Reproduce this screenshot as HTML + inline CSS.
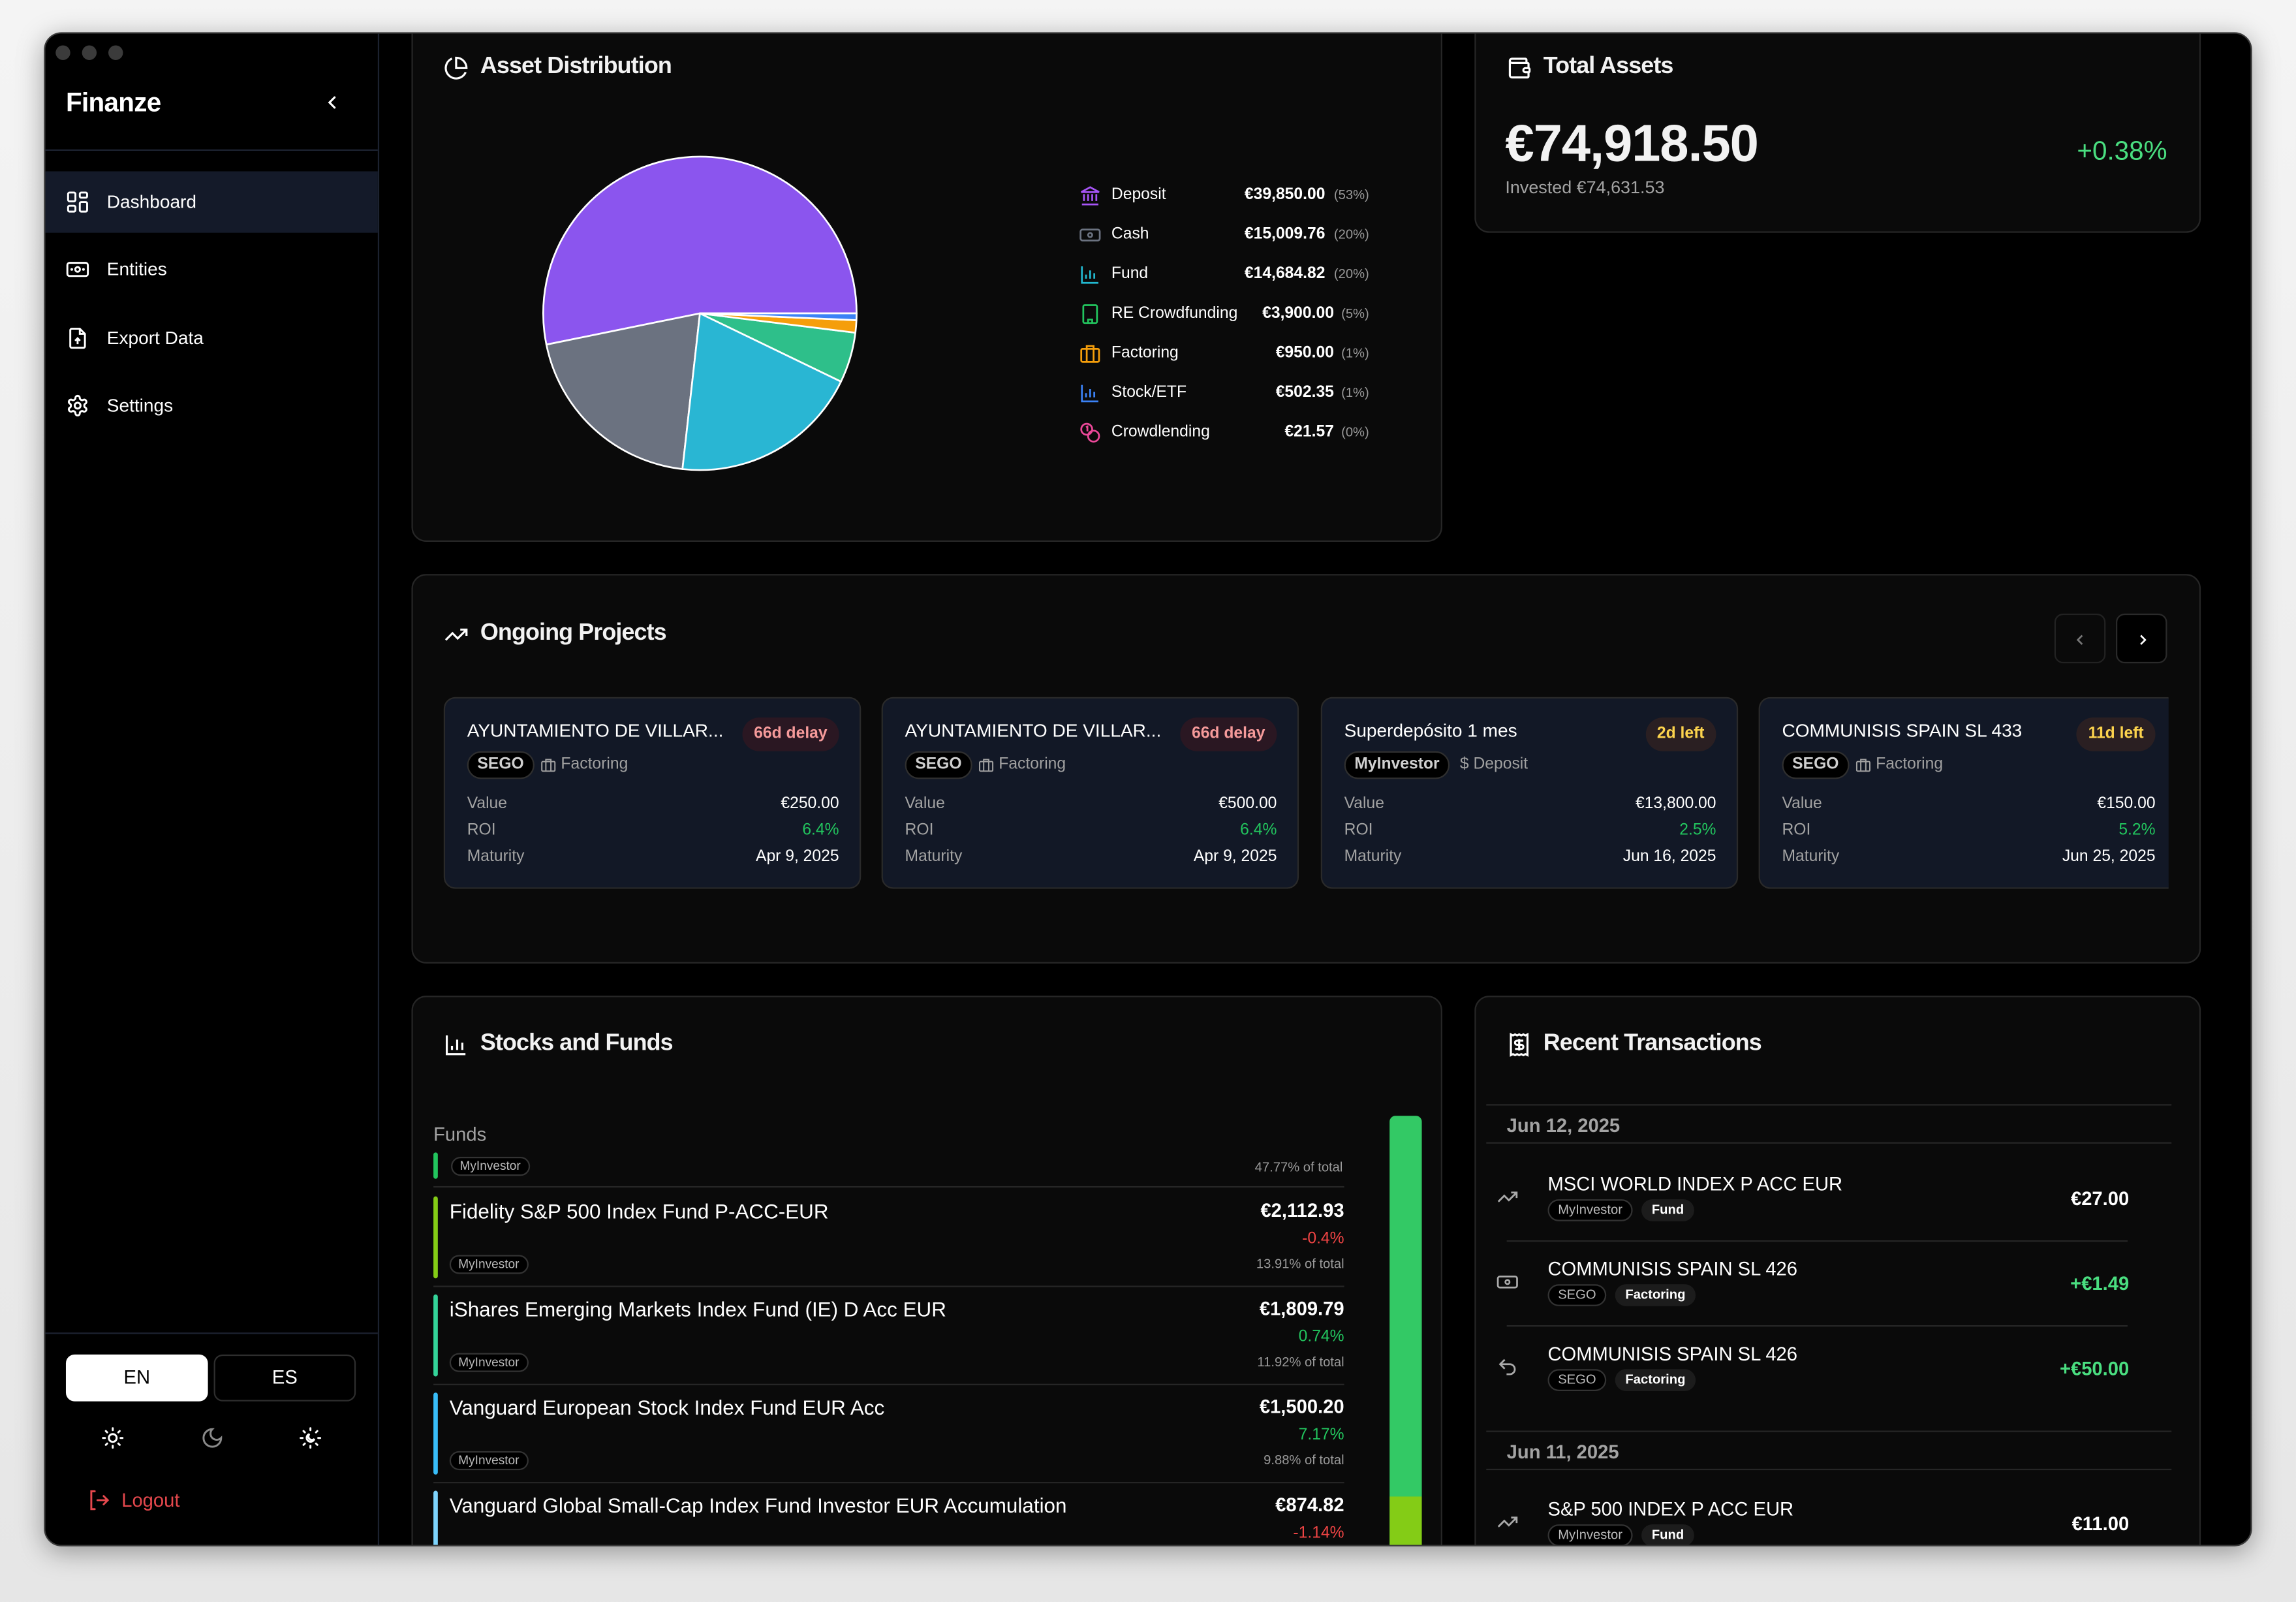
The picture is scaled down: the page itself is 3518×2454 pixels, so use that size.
<!DOCTYPE html>
<html><head><meta charset="utf-8">
<style>
*{box-sizing:border-box;margin:0;padding:0}
html,body{width:3518px;height:2454px;overflow:hidden;background:#ececec;font-family:"Liberation Sans",Arial,sans-serif}
#s{position:absolute;left:0;top:0;width:1568px;height:1094px;transform:scale(2.2436,2.2431);transform-origin:0 0;background:linear-gradient(#f4f4f4,#e6e6e6)}
.win{position:absolute;left:30px;top:22px;width:1508px;height:1034px;border-radius:12px;background:#000;overflow:hidden;box-shadow:0 4px 18px rgba(0,0,0,.35);border:1px solid #3a3a3a}
.a{position:absolute}
.side{position:absolute;left:0;top:0;width:228px;height:1034px;background:#000;border-right:1px solid #1c2230}
.dot{position:absolute;top:8px;width:10px;height:10px;border-radius:50%;background:#3b3b3b}
.nav{position:absolute;left:0;width:227px;height:42px;display:flex;align-items:center;color:#fff;font-size:12.5px}
.nav svg{margin-left:14px;margin-right:12px}
.card{position:absolute;background:#0a0a0a;border:1px solid #262626;border-radius:10px}
.ttl{position:absolute;display:flex;align-items:center;color:#f2f2f2;font-weight:bold;font-size:16px;letter-spacing:-.4px}
.ttl svg{margin-right:8px}
.lg{position:absolute;left:0;width:198px;height:16px;font-size:11px;color:#fff}
.lg .n{position:absolute;left:22px;top:1px}
.lg .v{position:absolute;right:30px;top:1px;font-weight:bold}
.lg .p{position:absolute;right:0;top:2px;color:#9a9a9a;font-size:9px}
.lg svg{position:absolute;left:0;top:0}
.pc{position:absolute;top:476px;width:285px;height:131px;background:#121826;border:1px solid #2a2a2a;border-radius:8px;overflow:hidden}
.pc .t{position:absolute;left:15px;top:15px;color:#fff;font-size:12.5px;white-space:nowrap}
.pc .b{position:absolute;right:14px;top:13px;height:23px;padding:0 8px;border-radius:12px;font-size:11px;font-weight:bold;line-height:23px}
.pc .pill{position:absolute;left:15px;top:36px;height:19px;padding:0 6px;border-radius:10px;background:#000;border:1px solid #2f2f2f;color:#d0d0d0;font-size:11px;font-weight:bold;line-height:17px}
.pc .cat{position:absolute;top:39px;color:#a0a0a0;font-size:11px;display:flex;align-items:center}
.pc .r{position:absolute;left:15px;right:14px;height:14px;font-size:11px;color:#a3a3a3}
.pc .r span{position:absolute;right:0;color:#fff}
.pl{display:inline-block;height:13px;padding:0 5px;border-radius:7px;border:1px solid #333;background:#000;color:#bbb;font-size:8.5px;line-height:11px}
.fr{position:absolute;left:14px;width:622px;height:60px}
.fr .bar{position:absolute;left:0;top:0;width:3px;height:56px;border-radius:2px}
.fr .nm{position:absolute;left:11px;top:2px;color:#fff;font-size:14px;white-space:nowrap}
.fr .v{position:absolute;right:0;top:2px;color:#fff;font-size:13px;font-weight:bold}
.fr .ch{position:absolute;right:0;top:23px;font-size:11px}
.fr .pl{position:absolute;left:11px;top:40px}
.fr .of{position:absolute;right:0;top:41px;color:#9a9a9a;font-size:9px}
.hl{position:absolute;height:1px;background:#262626}
.tx{position:absolute;left:14px;width:432px;height:58px}
.tx .nm{position:absolute;left:35px;top:-1px;color:#fff;font-size:13px}
.tx .tags{position:absolute;left:35px;top:17px;display:flex;gap:6px}
.tx .amt{position:absolute;right:0;top:9px;font-size:13px;font-weight:bold}
.tx svg{position:absolute;left:0;top:8px}
.tg{height:15px;padding:0 6px;border-radius:8px;font-size:9px;line-height:13px;border:1px solid #333;color:#bbb;background:#000}
.tg.f{background:#1c1c1c;border-color:#1c1c1c;color:#fff;font-weight:bold}
</style></head><body>
<div id="s">
<div class="win">
 <div class="side">
  <div class="dot" style="left:7px"></div><div class="dot" style="left:25px"></div><div class="dot" style="left:43px"></div>
  <div class="a" style="left:14px;top:37px;color:#fff;font-size:18px;font-weight:bold;letter-spacing:-.3px">Finanze</div>
  <svg class="a" style="left:190px;top:41px" width="12" height="12" viewBox="0 0 12 12"><path d="M7.5 2.5L4 6l3.5 3.5" stroke="#fff" stroke-width="1.4" fill="none" stroke-linecap="round"/></svg>
  <div class="a" style="left:0;top:79px;width:227px;height:1px;background:#1c2230"></div>
  <div class="nav" style="top:94px;background:#141a29"><svg width="16" height="16" viewBox="0 0 16 16" fill="none" stroke="#fff" stroke-width="1.3"><rect x="1.5" y="1.5" width="5" height="6" rx="1"/><rect x="9.5" y="1.5" width="5" height="3.5" rx="1"/><rect x="9.5" y="8" width="5" height="6.5" rx="1"/><rect x="1.5" y="10.5" width="5" height="4" rx="1"/></svg>Dashboard</div>
  <div class="nav" style="top:140px"><svg width="16" height="16" viewBox="0 0 16 16" fill="none" stroke="#fff" stroke-width="1.3"><rect x="1" y="3.5" width="14" height="9" rx="1.5"/><circle cx="8" cy="8" r="1.6"/><path d="M4 8h.01M12 8h.01" stroke-linecap="round" stroke-width="1.8"/></svg>Entities</div>
  <div class="nav" style="top:187px"><svg width="16" height="16" viewBox="0 0 16 16" fill="none" stroke="#fff" stroke-width="1.3"><path d="M9.5 1.5H4a1 1 0 0 0-1 1v11a1 1 0 0 0 1 1h8a1 1 0 0 0 1-1V5z"/><path d="M9.5 1.5V5H13M8 12V8M6.3 9.7L8 8l1.7 1.7"/></svg>Export Data</div>
  <div class="nav" style="top:233px"><svg width="16" height="16" viewBox="0 0 24 24" fill="none" stroke="#fff" stroke-width="2"><path d="M12.22 2h-.44a2 2 0 0 0-2 2v.18a2 2 0 0 1-1 1.730l-.43.25a2 2 0 0 1-2 0l-.15-.08a2 2 0 0 0-2.73.73l-.22.38a2 2 0 0 0 .73 2.73l.15.1a2 2 0 0 1 1 1.72v.51a2 2 0 0 1-1 1.74l-.15.09a2 2 0 0 0-.73 2.73l.22.38a2 2 0 0 0 2.73.73l.15-.08a2 2 0 0 1 2 0l.43.25a2 2 0 0 1 1 1.73V20a2 2 0 0 0 2 2h.44a2 2 0 0 0 2-2v-.18a2 2 0 0 1 1-1.73l.43-.25a2 2 0 0 1 2 0l.15.08a2 2 0 0 0 2.73-.73l.22-.39a2 2 0 0 0-.73-2.73l-.15-.08a2 2 0 0 1-1-1.74v-.5a2 2 0 0 1 1-1.74l.15-.09a2 2 0 0 0 .73-2.73l-.22-.38a2 2 0 0 0-2.73-.73l-.15.08a2 2 0 0 1-2 0l-.43-.25a2 2 0 0 1-1-1.73V4a2 2 0 0 0-2-2z"/><circle cx="12" cy="12" r="3"/></svg>Settings</div>
  <div class="a" style="left:0;top:887px;width:227px;height:1px;background:#1c2230"></div>
  <div class="a" style="left:14px;top:902px;width:97px;height:32px;background:#fff;border-radius:6px;color:#000;font-size:13px;text-align:center;line-height:32px">EN</div>
  <div class="a" style="left:115px;top:902px;width:97px;height:32px;border:1px solid #2e2e2e;border-radius:6px;color:#fff;font-size:13px;text-align:center;line-height:30px">ES</div>
  <svg class="a" style="left:38px;top:951px" width="16" height="16" viewBox="0 0 24 24" fill="none" stroke="#fff" stroke-width="2" stroke-linecap="round"><circle cx="12" cy="12" r="4"/><path d="M12 2v2M12 20v2M4.9 4.9l1.4 1.4M17.7 17.7l1.4 1.4M2 12h2M20 12h2M6.3 17.7l-1.4 1.4M19.1 4.9l-1.4 1.4"/></svg>
  <svg class="a" style="left:106px;top:951px" width="16" height="16" viewBox="0 0 24 24" fill="none" stroke="#8a8a8a" stroke-width="2"><path d="M12 3a6 6 0 0 0 9 9 9 9 0 1 1-9-9z"/></svg>
  <svg class="a" style="left:173px;top:951px" width="16" height="16" viewBox="0 0 24 24" fill="none" stroke="#fff" stroke-width="2" stroke-linecap="round"><path d="M12 2v2M12 20v2M4.9 4.9l1.4 1.4M17.7 17.7l1.4 1.4M2 12h2M20 12h2M6.3 17.7l-1.4 1.4M19.1 4.9l-1.4 1.4"/><path d="M11 8a4 4 0 1 0 5 5 3 3 0 0 1-5-5z"/></svg>
  <svg class="a" style="left:29px;top:994px" width="15" height="15" viewBox="0 0 16 16" fill="none" stroke="#e5484d" stroke-width="1.4" stroke-linecap="round"><path d="M5 1.5H2.5v13H5M7 8h7.5M11.5 5l3 3-3 3"/></svg>
  <div class="a" style="left:52px;top:994px;color:#e5484d;font-size:13px">Logout</div>
 </div>

 <div class="card" style="left:250px;top:-20px;width:704px;height:367px"></div>
 <div class="ttl" style="left:272px;top:14px"><svg width="17" height="17" viewBox="0 0 24 24" fill="none" stroke="#fff" stroke-width="2"><path d="M21.2 15.9A10 10 0 1 1 8 2.8"/><path d="M22 12A10 10 0 0 0 12 2v10z"/></svg>Asset Distribution</div>
 <svg class="a" style="left:-30px;top:-22px" width="1568" height="1094">
  <g stroke="#fff" stroke-width="1.2" stroke-linejoin="round">
   <path d="M477 213L584 213A107 107 0 1 0 372.15 234.33Z" fill="#8b55ee"/>
   <path d="M477 213L372.15 234.33A107 107 0 0 0 465.07 319.33Z" fill="#6b7280"/>
   <path d="M477 213L465.07 319.33A107 107 0 0 0 573.33 259.57Z" fill="#29b6d3"/>
   <path d="M477 213L573.33 259.57A107 107 0 0 0 583.18 226.23Z" fill="#2ebf8a"/>
   <path d="M477 213L583.18 226.23A107 107 0 0 0 583.9 217.67Z" fill="#f59e0b"/>
   <path d="M477 213L583.9 217.67A107 107 0 0 0 584 213Z" fill="#3b82f6"/>
  </g>
 </svg>
 <div class="a" style="left:706px;top:103px;width:198px">
  <div class="lg" style="top:0"><svg width="15" height="15" viewBox="0 0 16 16" fill="none" stroke="#a855f7" stroke-width="1.3"><path d="M2 14.5h12M3.5 12V7M6.5 12V7M9.5 12V7M12.5 12V7M1.5 5.5L8 2l6.5 3.5z"/></svg><span class="n">Deposit</span><span class="v">€39,850.00</span><span class="p">(53%)</span></div>
  <div class="lg" style="top:27px"><svg width="15" height="15" viewBox="0 0 16 16" fill="none" stroke="#6b7280" stroke-width="1.3"><rect x="1" y="4" width="14" height="8" rx="1.5"/><circle cx="8" cy="8" r="1.5"/></svg><span class="n">Cash</span><span class="v">€15,009.76</span><span class="p">(20%)</span></div>
  <div class="lg" style="top:54px"><svg width="15" height="15" viewBox="0 0 16 16" fill="none" stroke="#22b8cf" stroke-width="1.3"><path d="M2 2v12h12M5 11V8M8 11V5M11 11V7"/></svg><span class="n">Fund</span><span class="v">€14,684.82</span><span class="p">(20%)</span></div>
  <div class="lg" style="top:81px"><svg width="15" height="15" viewBox="0 0 16 16" fill="none" stroke="#22c55e" stroke-width="1.3"><rect x="3" y="1.5" width="10" height="13" rx="1"/><path d="M6.5 14.5v-2.5h3v2.5M5.5 4.5h.01M8 4.5h.01M10.5 4.5h.01M5.5 7h.01M8 7h.01M10.5 7h.01M5.5 9.5h.01M8 9.5h.01M10.5 9.5h.01"/></svg><span class="n">RE Crowdfunding</span><span class="v" style="right:24px">€3,900.00</span><span class="p">(5%)</span></div>
  <div class="lg" style="top:108px"><svg width="15" height="15" viewBox="0 0 16 16" fill="none" stroke="#f59e0b" stroke-width="1.3"><rect x="1.5" y="4.5" width="13" height="9.5" rx="1"/><path d="M5.5 4.5V2.5h5v2M5.5 4.5V14M10.5 4.5V14"/></svg><span class="n">Factoring</span><span class="v" style="right:24px">€950.00</span><span class="p">(1%)</span></div>
  <div class="lg" style="top:135px"><svg width="15" height="15" viewBox="0 0 16 16" fill="none" stroke="#3b82f6" stroke-width="1.3"><path d="M2 2v12h12M5 11V8M8 11V5M11 11V7"/></svg><span class="n">Stock/ETF</span><span class="v" style="right:24px">€502.35</span><span class="p">(1%)</span></div>
  <div class="lg" style="top:162px"><svg width="15" height="15" viewBox="0 0 16 16" fill="none" stroke="#ec4899" stroke-width="1.3"><circle cx="5.5" cy="5.5" r="4"/><circle cx="10.5" cy="10.5" r="4"/><path d="M5 4l1-.5V7"/></svg><span class="n">Crowdlending</span><span class="v" style="right:24px">€21.57</span><span class="p">(0%)</span></div>
 </div>

 <div class="card" style="left:976px;top:-20px;width:496px;height:156px"></div>
 <div class="ttl" style="left:998px;top:14px"><svg width="17" height="17" viewBox="0 0 24 24" fill="none" stroke="#fff" stroke-width="2"><path d="M19 7V4a1 1 0 0 0-1-1H5a2 2 0 0 0 0 4h15a1 1 0 0 1 1 1v4h-3a2 2 0 0 0 0 4h3a1 1 0 0 0 1-1v-2a1 1 0 0 0-1-1"/><path d="M3 5v14a2 2 0 0 0 2 2h15a1 1 0 0 0 1-1v-4"/></svg>Total Assets</div>
 <div class="a" style="left:997px;top:55px;color:#f2f2f2;font-size:35.5px;font-weight:bold;letter-spacing:-.5px">€74,918.50</div>
 <div class="a" style="right:57px;top:70px;color:#4ade80;font-size:18px">+0.38%</div>
 <div class="a" style="left:997px;top:98px;color:#a3a3a3;font-size:12px">Invested €74,631.53</div>

 <div class="card" style="left:250px;top:369px;width:1222px;height:266px"></div>
 <div class="ttl" style="left:272px;top:401px"><svg width="17" height="17" viewBox="0 0 24 24" fill="none" stroke="#fff" stroke-width="2"><path d="M22 7l-8.5 8.5-5-5L2 17M16 7h6v6"/></svg>Ongoing Projects</div>
 <div class="a" style="left:1372px;top:396px;width:35px;height:34px;border:1px solid #222;border-radius:6px;background:#0a0a0a"><svg class="a" style="left:11px;top:11px" width="12" height="12" viewBox="0 0 12 12"><path d="M7 3L4 6l3 3" stroke="#777" stroke-width="1.2" fill="none"/></svg></div>
 <div class="a" style="left:1414px;top:396px;width:35px;height:34px;border:1px solid #2a2a2a;border-radius:6px;background:#000"><svg class="a" style="left:11px;top:11px" width="12" height="12" viewBox="0 0 12 12"><path d="M5 3l3 3-3 3" stroke="#fff" stroke-width="1.2" fill="none"/></svg></div>

 <div class="pc" style="left:272px;top:453px"><div class="t">AYUNTAMIENTO DE VILLAR...</div><div class="b" style="background:#2a1722;color:#f59a9a">66d delay</div><div class="pill">SEGO</div><div class="cat" style="left:65px"><svg width="11" height="11" viewBox="0 0 16 16" fill="none" stroke="#a0a0a0" stroke-width="1.3"><rect x="1.5" y="4.5" width="13" height="9.5" rx="1"/><path d="M5.5 4.5V2.5h5v2M5.5 4.5V14M10.5 4.5V14"/></svg>&nbsp;Factoring</div>
  <div class="r" style="top:66px">Value<span>€250.00</span></div><div class="r" style="top:84px">ROI<span style="color:#22c55e">6.4%</span></div><div class="r" style="top:102px">Maturity<span>Apr 9, 2025</span></div></div>
 <div class="pc" style="left:571px;top:453px"><div class="t">AYUNTAMIENTO DE VILLAR...</div><div class="b" style="background:#2a1722;color:#f59a9a">66d delay</div><div class="pill">SEGO</div><div class="cat" style="left:65px"><svg width="11" height="11" viewBox="0 0 16 16" fill="none" stroke="#a0a0a0" stroke-width="1.3"><rect x="1.5" y="4.5" width="13" height="9.5" rx="1"/><path d="M5.5 4.5V2.5h5v2M5.5 4.5V14M10.5 4.5V14"/></svg>&nbsp;Factoring</div>
  <div class="r" style="top:66px">Value<span>€500.00</span></div><div class="r" style="top:84px">ROI<span style="color:#22c55e">6.4%</span></div><div class="r" style="top:102px">Maturity<span>Apr 9, 2025</span></div></div>
 <div class="pc" style="left:871px;top:453px"><div class="t">Superdepósito 1 mes</div><div class="b" style="background:#2a1f22;color:#fcd34d">2d left</div><div class="pill">MyInvestor</div><div class="cat" style="left:94px">$&nbsp;Deposit</div>
  <div class="r" style="top:66px">Value<span>€13,800.00</span></div><div class="r" style="top:84px">ROI<span style="color:#22c55e">2.5%</span></div><div class="r" style="top:102px">Maturity<span>Jun 16, 2025</span></div></div>
 <div class="pc" style="left:1170px;top:453px;width:280px;border-right:none;border-radius:8px 0 0 8px"><div class="t">COMMUNISIS SPAIN SL 433</div><div class="b" style="right:9px;background:#2a1f22;color:#fcd34d">11d left</div><div class="pill">SEGO</div><div class="cat" style="left:65px"><svg width="11" height="11" viewBox="0 0 16 16" fill="none" stroke="#a0a0a0" stroke-width="1.3"><rect x="1.5" y="4.5" width="13" height="9.5" rx="1"/><path d="M5.5 4.5V2.5h5v2M5.5 4.5V14M10.5 4.5V14"/></svg>&nbsp;Factoring</div>
  <div class="r" style="top:66px;right:9px">Value<span>€150.00</span></div><div class="r" style="top:84px;right:9px">ROI<span style="color:#22c55e">5.2%</span></div><div class="r" style="top:102px;right:9px">Maturity<span>Jun 25, 2025</span></div></div>

 <div class="card" style="left:250px;top:657px;width:704px;height:420px">
  <div class="ttl" style="left:21px;top:23px"><svg width="17" height="17" viewBox="0 0 24 24" fill="none" stroke="#fff" stroke-width="2"><path d="M3 3v18h18M8 17v-4M13 17V7M18 17v-7"/></svg>Stocks and Funds</div>
  <div class="a" style="left:14px;top:86px;color:#a3a3a3;font-size:13px">Funds</div>
  <div class="a" style="left:14px;top:106px;width:3px;height:18px;background:#22c55e;border-radius:2px"></div>
  <span class="pl a" style="left:26px;top:109px">MyInvestor</span>
  <div class="a" style="left:540px;top:111px;width:95px;text-align:right;color:#9a9a9a;font-size:9px">47.77% of total</div>
  <div class="hl" style="left:14px;top:129px;width:622px"></div>
  <div class="fr" style="top:136px"><div class="bar" style="background:#84cc16"></div><div class="nm">Fidelity S&amp;P 500 Index Fund P-ACC-EUR</div><div class="v">€2,112.93</div><div class="ch" style="color:#ef4444">-0.4%</div><span class="pl">MyInvestor</span><div class="of">13.91% of total</div></div>
  <div class="hl" style="left:14px;top:197px;width:622px"></div>
  <div class="fr" style="top:203px"><div class="bar" style="background:#34d399"></div><div class="nm">iShares Emerging Markets Index Fund (IE) D Acc EUR</div><div class="v">€1,809.79</div><div class="ch" style="color:#22c55e">0.74%</div><span class="pl">MyInvestor</span><div class="of">11.92% of total</div></div>
  <div class="hl" style="left:14px;top:264px;width:622px"></div>
  <div class="fr" style="top:270px"><div class="bar" style="background:#38bdf8"></div><div class="nm">Vanguard European Stock Index Fund EUR Acc</div><div class="v">€1,500.20</div><div class="ch" style="color:#22c55e">7.17%</div><span class="pl">MyInvestor</span><div class="of">9.88% of total</div></div>
  <div class="hl" style="left:14px;top:331px;width:622px"></div>
  <div class="fr" style="top:337px"><div class="bar" style="background:#7dd3fc"></div><div class="nm">Vanguard Global Small-Cap Index Fund Investor EUR Accumulation</div><div class="v">€874.82</div><div class="ch" style="color:#ef4444">-1.14%</div></div>
  <div class="a" style="left:667px;top:81px;width:22px;height:340px;background:#33c965;border-radius:4px 4px 0 0;overflow:hidden"><div class="a" style="left:0;top:260px;width:22px;height:80px;background:#84cc16"></div></div>
 </div>

 <div class="card" style="left:976px;top:657px;width:496px;height:420px">
  <div class="ttl" style="left:21px;top:23px"><svg width="17" height="17" viewBox="0 0 24 24" fill="none" stroke="#fff" stroke-width="2"><path d="M4 2v20l2-1 2 1 2-1 2 1 2-1 2 1 2-1 2 1V2l-2 1-2-1-2 1-2-1-2 1-2-1-2 1z"/><path d="M16 8h-6a2 2 0 1 0 0 4h4a2 2 0 1 1 0 4H8M12 17.5v-11"/></svg>Recent Transactions</div>
  <div class="hl" style="left:7px;top:73px;width:468px"></div>
  <div class="a" style="left:21px;top:80px;color:#a3a3a3;font-size:13px;font-weight:bold">Jun 12, 2025</div>
  <div class="hl" style="left:7px;top:99px;width:468px"></div>
  <div class="tx" style="top:121px"><svg width="15" height="15" viewBox="0 0 24 24" fill="none" stroke="#aaa" stroke-width="2"><path d="M22 7l-8.5 8.5-5-5L2 17M16 7h6v6"/></svg><div class="nm">MSCI WORLD INDEX P ACC EUR</div><div class="tags"><span class="tg">MyInvestor</span><span class="tg f">Fund</span></div><div class="amt" style="color:#fff">€27.00</div></div>
  <div class="hl" style="left:21px;top:166px;width:424px"></div>
  <div class="tx" style="top:179px"><svg width="15" height="15" viewBox="0 0 16 16" fill="none" stroke="#aaa" stroke-width="1.3"><rect x="1" y="4" width="14" height="8" rx="1.5"/><circle cx="8" cy="8" r="1.5"/></svg><div class="nm">COMMUNISIS SPAIN SL 426</div><div class="tags"><span class="tg">SEGO</span><span class="tg f">Factoring</span></div><div class="amt" style="color:#4ade80">+€1.49</div></div>
  <div class="hl" style="left:21px;top:224px;width:424px"></div>
  <div class="tx" style="top:237px"><svg width="15" height="15" viewBox="0 0 24 24" fill="none" stroke="#aaa" stroke-width="2"><path d="M9 14L4 9l5-5"/><path d="M4 9h10.5a5.5 5.5 0 0 1 5.5 5.5v0a5.5 5.5 0 0 1-5.5 5.5H11"/></svg><div class="nm">COMMUNISIS SPAIN SL 426</div><div class="tags"><span class="tg">SEGO</span><span class="tg f">Factoring</span></div><div class="amt" style="color:#4ade80">+€50.00</div></div>
  <div class="hl" style="left:7px;top:296px;width:468px"></div>
  <div class="a" style="left:21px;top:303px;color:#a3a3a3;font-size:13px;font-weight:bold">Jun 11, 2025</div>
  <div class="hl" style="left:7px;top:322px;width:468px"></div>
  <div class="tx" style="top:343px"><svg width="15" height="15" viewBox="0 0 24 24" fill="none" stroke="#aaa" stroke-width="2"><path d="M22 7l-8.5 8.5-5-5L2 17M16 7h6v6"/></svg><div class="nm">S&amp;P 500 INDEX P ACC EUR</div><div class="tags"><span class="tg">MyInvestor</span><span class="tg f">Fund</span></div><div class="amt" style="color:#fff">€11.00</div></div>
 </div>
</div>
</div>
</body></html>
